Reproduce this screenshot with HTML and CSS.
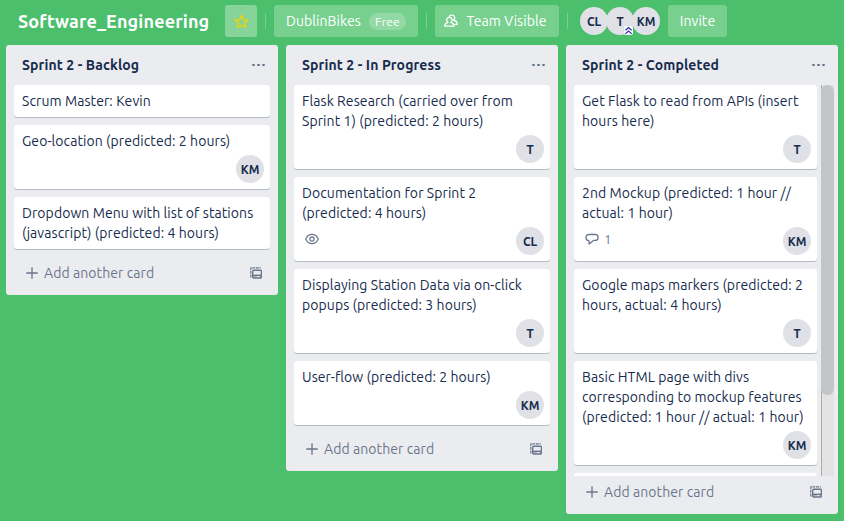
FILE: index.html
```html
<!DOCTYPE html>
<html lang="en">
<head>
<meta charset="utf-8">
<title>Software_Engineering</title>
<link rel="stylesheet" href="styles.css">
</head>
<body>
<svg class="defs" width="0" height="0">
  <symbol id="plus" viewBox="0 0 12 12"><path d="M6 .3v11.4M.3 6h11.4" fill="none" stroke="currentColor" stroke-width="1.3"/></symbol>
  <symbol id="template" viewBox="0 0 12 12"><path d="M.8 10.500V.900H10.800" fill="none" stroke="currentColor" stroke-width="1.200" stroke-dasharray="3 .7"/><rect x="2.700" y="3.200" width="8.700" height="7.800" rx="1" fill="none" stroke="currentColor" stroke-width="1.400"/><path d="M2.700 8.300h8.700" fill="none" stroke="currentColor" stroke-width="1.400"/><path d="M2.700 9.700h4.300M9.200 9.700h2" fill="none" stroke="currentColor" stroke-width="1.400" stroke-opacity=".5"/></symbol>
</svg>
<header class="topbar">
  <h1 class="board-name">Software_Engineering</h1>
  <div class="btn star"><svg width="15" height="15" viewBox="0 0 14 14"><path d="M7 1.300l1.700 3.800 4.300.4-3.200 2.800 1 4.200L7 10.400l-3.800 2.100 1-4.200L1 5.500l4.300-.4z" fill="none" stroke="#e9d30c" stroke-width="1.400" stroke-linejoin="round"/></svg></div>
  <i class="sep"></i>
  <div class="btn team"><span class="team-name">DublinBikes</span><span class="pill">Free</span></div>
  <i class="sep"></i>
  <div class="btn visibility"><svg width="14" height="14" viewBox="0 0 14 14"><g fill="none" stroke="#fff" stroke-width="1.300" stroke-linejoin="round"><path d="M.8 12.200c0-2.200 1.200-3.400 3.100-3.900a2.700 2.700 0 1 1 3 0c1.900.5 3.100 1.700 3.100 3.900z"/><path d="M5 3.600C5.200 2 6.200 1.200 7.600 1.200a2.600 2.600 0 0 1 1.800 4.800C11.700 6.500 13.200 7.900 13.200 10.400H10.600"/></g></svg><span class="vis-name">Team Visible</span></div>
  <i class="sep"></i>
  <div class="members">
    <span class="avatar">CL</span>
    <span class="avatar admin">T<svg class="chevrons" width="9" height="9" viewBox="0 0 9 9"><rect width="9" height="9" rx="2" fill="#fff"/><path d="M1.300 4.300L4.500 1.700l3.200 2.600M1.300 7.700L4.500 5.100l3.200 2.600" fill="none" stroke="#3a3ab8" stroke-width="1.300"/></svg></span>
    <span class="avatar">KM</span>
  </div>
  <div class="btn invite">Invite</div>
</header>
<main class="board">
  <section class="list">
    <header class="list-head"><h2>Sprint 2 - Backlog</h2><span class="dots"><i></i><i></i><i></i></span></header>
    <div class="cards">
      <article class="card"><p>Scrum Master: Kevin</p></article>
      <article class="card"><p>Geo-location (predicted: 2 hours)</p><div class="meta"><span class="avatar">KM</span></div></article>
      <article class="card"><p>Dropdown Menu with list of stations<br>(javascript) (predicted: 4 hours)</p></article>
    </div>
    <footer class="list-foot"><svg width="12" height="12"><use href="#plus"/></svg><span class="add">Add another card</span><svg width="12" height="12"><use href="#template"/></svg></footer>
  </section>
  <section class="list">
    <header class="list-head"><h2>Sprint 2 - In Progress</h2><span class="dots"><i></i><i></i><i></i></span></header>
    <div class="cards">
      <article class="card"><p>Flask Research (carried over from<br>Sprint 1) (predicted: 2 hours)</p><div class="meta"><span class="avatar">T</span></div></article>
      <article class="card"><p>Documentation for Sprint 2<br>(predicted: 4 hours)</p><div class="meta"><span class="badge"><svg width="14" height="12" viewBox="0 0 14 12"><g fill="none" stroke="currentColor" stroke-width="1.200"><path d="M.7 6C2 3 4.200 1.300 7 1.300S12 3 13.300 6C12 9 9.800 10.700 7 10.700S2 9 .7 6z"/><circle cx="7" cy="6" r="2.100"/></g></svg></span><span class="avatar">CL</span></div></article>
      <article class="card"><p>Displaying Station Data via on-click<br>popups (predicted: 3 hours)</p><div class="meta"><span class="avatar">T</span></div></article>
      <article class="card"><p>User-flow (predicted: 2 hours)</p><div class="meta"><span class="avatar">KM</span></div></article>
    </div>
    <footer class="list-foot"><svg width="12" height="12"><use href="#plus"/></svg><span class="add">Add another card</span><svg width="12" height="12"><use href="#template"/></svg></footer>
  </section>
  <section class="list">
    <header class="list-head"><h2>Sprint 2 - Completed</h2><span class="dots"><i></i><i></i><i></i></span></header>
    <div class="scroller">
      <div class="cards">
        <article class="card"><p>Get Flask to read from APIs (insert<br>hours here)</p><div class="meta"><span class="avatar">T</span></div></article>
        <article class="card"><p>2nd Mockup (predicted: 1 hour //<br>actual: 1 hour)</p><div class="meta"><span class="badge"><svg width="14" height="12" viewBox="0 0 14 12"><path d="M4 1.500h6.300c1.600 0 2.800 1.100 2.800 2.900S11.900 7.400 10.300 7.400H8.500L4.200 11 3.900 7.800C2.100 7.600.9 6.300.9 4.600.9 2.700 2.200 1.500 4 1.500z" fill="none" stroke="currentColor" stroke-width="1.300" stroke-linejoin="round"/></svg><span class="count">1</span></span><span class="avatar">KM</span></div></article>
        <article class="card"><p>Google maps markers (predicted: 2<br>hours, actual: 4 hours)</p><div class="meta"><span class="avatar">T</span></div></article>
        <article class="card"><p>Basic HTML page with divs<br>corresponding to mockup features<br>(predicted: 1 hour // actual: 1 hour)</p><div class="meta"><span class="avatar">KM</span></div></article>
        <article class="card next"></article>
      </div>
      <div class="track"><div class="thumb"></div></div>
    </div>
    <footer class="list-foot"><svg width="12" height="12"><use href="#plus"/></svg><span class="add">Add another card</span><svg width="12" height="12"><use href="#template"/></svg></footer>
  </section>
</main>
</body>
</html>
```
FILE: styles.css
```css
* { box-sizing: border-box; }
body { margin: 0; height: 521px; overflow: hidden; background: #4bbf6b; color: #172b4d; font: 14px/20px "Ubuntu", "Noto Sans", sans-serif; letter-spacing: 0.08px; }
h1, h2, p { margin: 0; white-space: nowrap; }
.defs { display: block; }
svg { display: block; flex: none; }
.topbar { display: flex; align-items: center; height: 45px; padding: 0 0 3px 18px; color: #fff; white-space: nowrap; }
.board-name { width: 207px; font-size: 18px; line-height: 24px; letter-spacing: 0.15px; }
.btn { display: flex; align-items: center; height: 32px; border-radius: 3px; background: #78d08f; }
.star { width: 32px; justify-content: center; background: #86d49a; }
.sep { width: 1px; height: 16px; margin: 0 8px; background: #78cf90; }
.team { width: 144px; padding-left: 12px; }
.team-name { width: 83px; }
.pill { width: 37px; height: 17px; border-radius: 9px; background: #93d9a5; font-size: 12px; line-height: 17px; letter-spacing: 0.25px; text-align: center; }
.visibility { width: 124px; padding-left: 9px; }
.vis-name { margin-left: 8.5px; }
.members { display: flex; margin-left: 4px; }
.members .avatar { width: 28px; margin-right: -2px; }
.avatar { display: block; flex: none; width: 28px; height: 28px; border-radius: 50%; background: #dfe1e6; color: #172b4d; font-size: 12px; font-weight: 700; line-height: 29px; letter-spacing: -0.1px; text-align: center; }
.admin { position: relative; }
.chevrons { position: absolute; right: 1px; bottom: 0; }
.invite { width: 59px; margin-left: 10px; justify-content: center; }
.board { display: flex; align-items: flex-start; gap: 8px; padding-left: 6px; }
.list { width: 272px; flex: none; border-radius: 3px; background: #ebecf0; }
.list-head { display: flex; justify-content: space-between; align-items: center; height: 40px; padding: 0 13.5px 0 16px; }
h2 { font-size: 14px; line-height: 20px; letter-spacing: 0.11px; }
.dots { display: flex; gap: 2.3px; }
.dots i { width: 2.6px; height: 2.6px; border-radius: 50%; background: #6b778c; }
.cards { padding: 0 8px; }
.card { margin-bottom: 8px; padding: 6px 8px; border-radius: 3px; background: #fff; box-shadow: 0 1px 0 #b3bac5; }
.meta { display: flex; justify-content: flex-end; height: 32px; padding-top: 4px; margin-right: -2px; }
.badge { display: flex; margin: 6px auto 0 3px; color: #6b778c; }
.count { margin: -4px 0 0 5px; font-size: 13px; }
.scroller { display: flex; height: 391px; overflow: hidden; }
.scroller .cards { width: 255px; padding-right: 4px; }
.next { height: 60px; }
.track { width: 13px; height: 391px; border-left: 1px solid #aaa; background: #e3e3e4; }
.thumb { width: 13px; height: 310px; margin-left: -1px; border-radius: 6px; background: #c4c5c7; }
.list-foot { display: flex; align-items: center; height: 38px; padding: 0 16px 6px 20px; color: #6b778c; }
.add { flex: 1; margin-left: 6px; white-space: nowrap; }
```
